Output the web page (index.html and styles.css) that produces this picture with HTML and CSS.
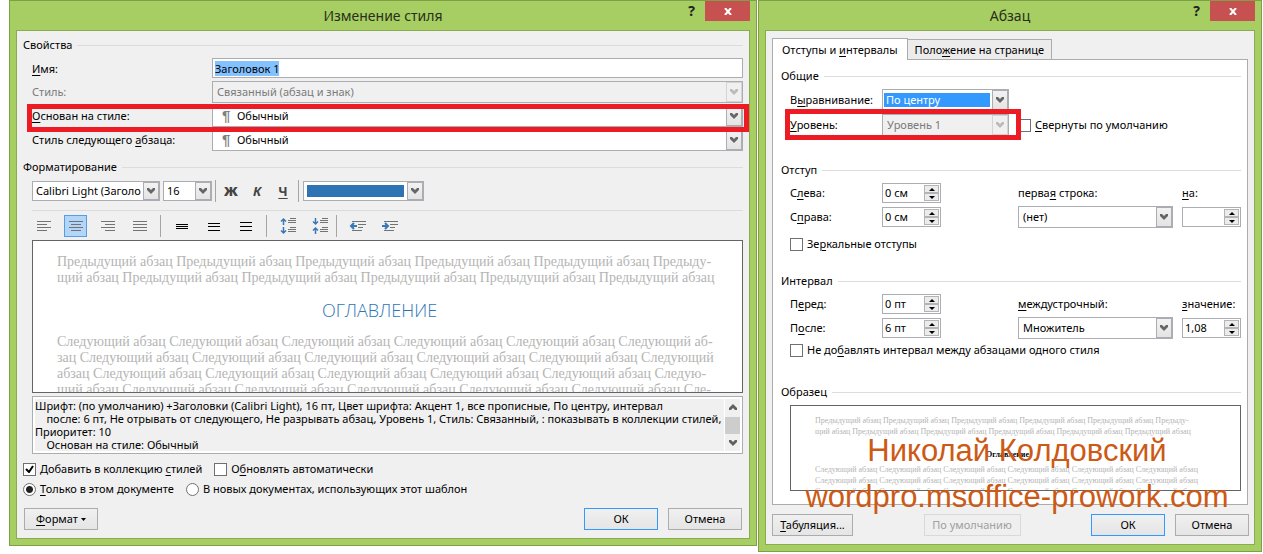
FILE: index.html
```html
<!DOCTYPE html>
<html lang="ru">
<head>
<meta charset="UTF-8">
<meta name="viewport" content="width=device-width, initial-scale=1.0">
<title>Изменение стиля</title>
<link rel="stylesheet" href="styles.css">
</head>
<body>

<main class="desktop">

<section class="dialog style-dialog">
    <header class="titlebar">
        <h1>Изменение стиля</h1>
        <div class="window-buttons">
            <button class="help-btn" aria-label="Справка">?</button>
            <button class="close-btn" aria-label="Закрыть"><svg width="8" height="7" viewBox="0 0 8 7"><path d="M1 0l6 7M7 0L1 7"/></svg></button>
        </div>
    </header>
    <div class="client">
        <h2 class="group-title">Свойства</h2>
        <div class="properties">
            <label for="styleName"><u>И</u>мя:</label>
            <input type="text" class="text-box" id="styleName" value="Заголовок 1">
            <label for="styleType" class="muted">Стиль:</label>
            <select class="combo" id="styleType" disabled><option>Связанный (абзац и знак)</option></select>
            <label for="basedOn"><u>О</u>снован на стиле:</label>
            <div class="combo-wrap">
                <select class="combo with-mark" id="basedOn"><option>Обычный</option></select>
                <span class="pilcrow">¶</span>
            </div>
            <label for="nextStyle">Стиль следующего <u>а</u>бзаца:</label>
            <div class="combo-wrap">
                <select class="combo with-mark" id="nextStyle"><option>Обычный</option></select>
                <span class="pilcrow">¶</span>
            </div>
            <div class="highlight highlight-based"></div>
        </div>

        <h2 class="group-title format-title">Форматирование</h2>
        <div class="toolbar font-bar">
            <select class="combo small font-name" aria-label="Шрифт"><option>Calibri Light (Заголовки)</option></select>
            <select class="combo small font-size" aria-label="Размер"><option>16</option></select>
            <span class="sep"></span>
            <button class="tool letter"><b>Ж</b></button>
            <button class="tool letter"><i>К</i></button>
            <button class="tool letter"><u>Ч</u></button>
            <span class="sep"></span>
            <button class="combo small color-btn" aria-label="Цвет шрифта"><span class="swatch"></span></button>
        </div>
        <div class="toolbar para-bar">
            <button class="tool" aria-label="По левому краю"><svg class="icon" viewBox="0 0 16 16"><path d="M1 3.5h14M1 6.5h10M1 9.5h14M1 12.5h10"/></svg></button>
            <button class="tool active" aria-label="По центру"><svg class="icon" viewBox="0 0 16 16"><path d="M1 3.5h14M3 6.5h10M1 9.5h14M3 12.5h10"/></svg></button>
            <button class="tool" aria-label="По правому краю"><svg class="icon" viewBox="0 0 16 16"><path d="M1 3.5h14M5 6.5h10M1 9.5h14M5 12.5h10"/></svg></button>
            <button class="tool" aria-label="По ширине"><svg class="icon" viewBox="0 0 16 16"><path d="M1 3.5h14M1 6.5h14M1 9.5h14M1 12.5h14"/></svg></button>
            <span class="sep"></span>
            <button class="tool" aria-label="Интервал 1"><svg class="icon dark" viewBox="0 0 16 16"><path d="M2 6.5h12M2 8.5h12M2 10.5h12"/></svg></button>
            <button class="tool" aria-label="Интервал 1,5"><svg class="icon dark" viewBox="0 0 16 16"><path d="M2 5.5h12M2 8.5h12M2 12.5h12"/></svg></button>
            <button class="tool" aria-label="Интервал 2"><svg class="icon dark" viewBox="0 0 16 16"><path d="M2 4.5h12M2 8.5h12M2 12.5h12"/></svg></button>
            <span class="sep"></span>
            <button class="tool" aria-label="Увеличить интервал"><svg class="icon" viewBox="0 0 16 16"><path d="M10 .5h6M8 2.5h8M8 4.5h8M10 9.5h6M8 11.5h8M8 13.5h8"/><path class="arrow" d="M3.5 1v6M1 3.5L3.5 1 6 3.5M3.5 9v6M1 12.5L3.5 15 6 12.5"/></svg></button>
            <button class="tool" aria-label="Уменьшить интервал"><svg class="icon" viewBox="0 0 16 16"><path d="M10 .5h6M8 2.5h8M8 4.5h8M10 9.5h6M8 11.5h8M8 13.5h8"/><path class="arrow" d="M3.5 0v6M1 3.5L3.5 6 6 3.5M3.5 10v6M1 12.5L3.5 10 6 12.5"/></svg></button>
            <span class="sep tight"></span>
            <button class="tool" aria-label="Уменьшить отступ"><svg class="icon" viewBox="0 0 16 16"><path d="M2 3.5h14M8 6.5h8M8 9.5h5M2 12.5h10"/><path class="arrow wide-arrow" d="M1 8h6M4 5L1 8l3 3"/></svg></button>
            <button class="tool" aria-label="Увеличить отступ"><svg class="icon" viewBox="0 0 16 16"><path d="M2 3.5h14M8 6.5h8M8 9.5h5M2 12.5h10"/><path class="arrow wide-arrow" d="M0 8h6M3 5l3 3-3 3"/></svg></button>
        </div>

        <div class="preview">
            <p>Предыдущий абзац Предыдущий абзац Предыдущий абзац Предыдущий абзац Предыдущий абзац Предыду-<br>щий абзац Предыдущий абзац Предыдущий абзац Предыдущий абзац Предыдущий абзац Предыдущий абзац</p>
            <p class="sample">ОГЛАВЛЕНИЕ</p>
            <p>Следующий абзац Следующий абзац Следующий абзац Следующий абзац Следующий абзац Следующий аб-<br>зац Следующий абзац Следующий абзац Следующий абзац Следующий абзац Следующий абзац Следующий<br>абзац Следующий абзац Следующий абзац Следующий абзац Следующий абзац Следующий абзац Следую-<br>щий абзац Следующий абзац Следующий абзац Следующий абзац Следующий абзац Следующий абзац Сле-</p>
        </div>

        <div class="description">
            <textarea rows="4" wrap="off" readonly aria-label="Описание стиля">Шрифт: (по умолчанию) +Заголовки (Calibri Light), 16 пт, Цвет шрифта: Акцент 1, все прописные, По центру, интервал
    после: 6 пт, Не отрывать от следующего, Не разрывать абзац, Уровень 1, Стиль: Связанный, : показывать в коллекции стилей,
Приоритет: 10
    Основан на стиле: Обычный</textarea>
            <div class="scrollbar">
                <svg width="8" height="6" viewBox="0 0 8 6"><path d="M0 6V4l4-4 4 4v2H6L4 4 2 6z"/></svg>
                <span class="thumb"></span>
                <svg width="8" height="6" viewBox="0 0 8 6"><path d="M0 0v2l4 4 4-4V0H6L4 2 2 0z"/></svg>
            </div>
        </div>

        <div class="options">
            <label><input type="checkbox" checked><span>Добавить в коллекцию <u>с</u>тилей</span></label>
            <label><input type="checkbox"><span>О<u>б</u>новлять автоматически</span></label>
        </div>
        <div class="options">
            <label><input type="radio" name="scope" checked><span><u>Т</u>олько в этом документе</span></label>
            <label><input type="radio" name="scope"><span>В новых документах, использующих этот шаблон</span></label>
        </div>

        <footer class="buttons">
            <button class="btn format-btn"><span><u>Ф</u>ормат</span><svg width="5" height="3" viewBox="0 0 5 3"><path d="M0 0h5L2.5 3z"/></svg></button>
            <span class="spacer"></span>
            <button class="btn default">ОК</button>
            <button class="btn">Отмена</button>
        </footer>
    </div>
</section>

<section class="dialog paragraph-dialog">
    <header class="titlebar">
        <h1>Абзац</h1>
        <div class="window-buttons">
            <button class="help-btn" aria-label="Справка">?</button>
            <button class="close-btn" aria-label="Закрыть"><svg width="8" height="7" viewBox="0 0 8 7"><path d="M1 0l6 7M7 0L1 7"/></svg></button>
        </div>
    </header>
    <div class="client">
        <div class="tabs" role="tablist">
            <button class="tab selected" role="tab">Отступы и <u>и</u>нтервалы</button>
            <button class="tab" role="tab">Поло<u>ж</u>ение на странице</button>
        </div>
        <div class="tab-panel">
            <h2 class="group-title">Общие</h2>
            <div class="general">
                <label for="align">В<u>ы</u>равнивание:</label>
                <select class="combo picked" id="align"><option>По центру</option></select>
                <span></span>
                <label for="level"><u>У</u>ровень:</label>
                <select class="combo" id="level" disabled><option>Уровень 1</option></select>
                <label class="check"><input type="checkbox"><span><u>С</u>вернуты по умолчанию</span></label>
                <div class="highlight highlight-level"></div>
            </div>

            <h2 class="group-title">Отступ</h2>
            <div class="fields">
                <label for="left">С<u>л</u>ева:</label>
                <div class="spin"><input type="text" id="left" value="0 см"><button class="up" aria-label="Больше"></button><button class="down" aria-label="Меньше"></button></div>
                <label for="firstLine" class="col-list">перва<u>я</u> строка:</label>
                <label for="firstBy"><u>н</u>а:</label>
                <label for="right">С<u>п</u>рава:</label>
                <div class="spin"><input type="text" id="right" value="0 см"><button class="up" aria-label="Больше"></button><button class="down" aria-label="Меньше"></button></div>
                <select class="combo col-list" id="firstLine"><option>(нет)</option></select>
                <div class="spin"><input type="text" id="firstBy" value=""><button class="up" aria-label="Больше"></button><button class="down" aria-label="Меньше"></button></div>
            </div>
            <label class="check mirror"><input type="checkbox"><span>Зе<u>р</u>кальные отступы</span></label>

            <h2 class="group-title">Интервал</h2>
            <div class="fields">
                <label for="before">П<u>е</u>ред:</label>
                <div class="spin"><input type="text" id="before" value="0 пт"><button class="up" aria-label="Больше"></button><button class="down" aria-label="Меньше"></button></div>
                <label for="lineRule" class="col-list"><u>м</u>еждустрочный:</label>
                <label for="lineAt"><u>з</u>начение:</label>
                <label for="after">П<u>о</u>сле:</label>
                <div class="spin"><input type="text" id="after" value="6 пт"><button class="up" aria-label="Больше"></button><button class="down" aria-label="Меньше"></button></div>
                <select class="combo col-list" id="lineRule"><option>Множитель</option></select>
                <div class="spin"><input type="text" id="lineAt" value="1,08"><button class="up" aria-label="Больше"></button><button class="down" aria-label="Меньше"></button></div>
            </div>
            <label class="check no-space"><input type="checkbox"><span>Не до<u>б</u>авлять интервал между абзацами одного стиля</span></label>

            <h2 class="group-title">Образец</h2>
            <div class="preview mini">
                <p>Предыдущий абзац Предыдущий абзац Предыдущий абзац Предыдущий абзац Предыдущий абзац Предыду-<br>щий абзац Предыдущий абзац Предыдущий абзац Предыдущий абзац Предыдущий абзац Предыдущий абзац</p>
                <p class="sample">Оглавление</p>
                <p>Следующий абзац Следующий абзац Следующий абзац Следующий абзац Следующий абзац Следующий абзац<br>Следующий абзац Следующий абзац Следующий абзац Следующий абзац Следующий абзац Следующий абзац<br>Следующий абзац Следующий абзац Следующий абзац Следующий абзац Следующий абзац Следующий абзац</p>
            </div>
        </div>

        <footer class="buttons">
            <button class="btn tabs-btn"><u>Т</u>абуляция...</button>
            <span class="spacer"></span>
            <button class="btn wide" disabled>По умолчанию</button>
            <span class="spacer"></span>
            <button class="btn default">ОК</button>
            <button class="btn">Отмена</button>
        </footer>
    </div>
    <div class="watermark">Николай Колдовский<br>wordpro.msoffice-prowork.com</div>
</section>

</main>

<script>
// Select the style name when the dialog opens
const styleName = document.getElementById('styleName');
styleName.focus();
styleName.select();
</script>
</body>
</html>
```
FILE: styles.css
```css
* {
    box-sizing: border-box;
}

body {
    margin: 0;
    background: #fff;
    color: #000;
    font-family: "Noto Sans", "Open Sans", sans-serif;
    font-size: 11px;
    line-height: 16px;
}

button,
input,
select,
textarea {
    font: inherit;
    color: inherit;
    margin: 0;
    border-radius: 0;
}

h1, h2, p {
    margin: 0;
    font-weight: normal;
}

u {
    text-underline-offset: 2px;
}

.desktop {
    display: grid;
    grid-template-columns: 748fr 504fr;
    align-items: start;
    gap: 1px;
    padding: 0 1px 0 9px;
}

/* windows */
.dialog {
    position: relative;
    min-width: 0;
    border: 1px solid #7f9f46;
    background: #a6ce62;
    padding: 0 6px 6px;
}

.titlebar {
    display: grid;
    grid-template-columns: 1fr auto 1fr;
    height: 29px;
}

.titlebar h1 {
    grid-column: 2;
    font-size: 14px;
    line-height: 30px;
    color: #2a2f1c;
}

.window-buttons {
    display: flex;
    justify-content: flex-end;
    align-items: flex-start;
    gap: 10px;
}

.help-btn {
    border: none;
    background: none;
    padding: 0;
    font-size: 14px;
    font-weight: bold;
    line-height: 20px;
    color: #222;
}

.close-btn {
    display: flex;
    align-items: center;
    justify-content: center;
    width: 45px;
    height: 20px;
    padding: 0;
    border: none;
    background: #c75050;
}

.close-btn svg {
    stroke: #fff;
    stroke-width: 2;
}

.client {
    border: 1px solid #8aab4f;
    background: #f0f0f0;
    padding: 6px 6px 8px;
}

.group-title {
    display: flex;
    align-items: center;
    gap: 5px;
    font-size: 11px;
    line-height: 16px;
}

.group-title::after {
    content: "";
    flex: 1;
    height: 1px;
    background: #dcdcdc;
}

/* controls */
.text-box {
    height: 20px;
    width: 100%;
    border: 1px solid #abadb3;
    background: #fff;
    padding: 0 2px;
    outline: none;
}

.text-box::selection {
    background: #84c1ff;
    color: #000;
}

.combo {
    appearance: none;
    height: 22px;
    width: 100%;
    padding: 0 18px 0 4px;
    border: 1px solid #abadb3;
    background-color: #fff;
    background-image:
        url("data:image/svg+xml,%3Csvg xmlns='http://www.w3.org/2000/svg' width='8' height='6'%3E%3Cpath d='M0 0v2l4 4 4-4V0H6L4 2 2 0z' fill='%23666'/%3E%3C/svg%3E"),
        linear-gradient(#f2f2f2, #e4e4e4),
        linear-gradient(#abadb3, #abadb3);
    background-size: 8px 6px, 14px calc(100% - 2px), 16px 100%;
    background-position: right 4px center, right 1px center, right center;
    background-repeat: no-repeat;
    text-overflow: clip;
    overflow: hidden;
    white-space: nowrap;
}

.combo:disabled {
    opacity: 1;
    color: #7a7a7a;
    background-color: #f0f0f0;
    background-image:
        url("data:image/svg+xml,%3Csvg xmlns='http://www.w3.org/2000/svg' width='8' height='6'%3E%3Cpath d='M0 0v2l4 4 4-4V0H6L4 2 2 0z' fill='%23bbb'/%3E%3C/svg%3E"),
        linear-gradient(#f0f0f0, #f0f0f0),
        linear-gradient(#d4d4d4, #d4d4d4);
}

.combo.small {
    height: 20px;
}

.combo.picked {
    padding-left: 3px;
    color: #fff;
    background-image:
        url("data:image/svg+xml,%3Csvg xmlns='http://www.w3.org/2000/svg' width='8' height='6'%3E%3Cpath d='M0 0v2l4 4 4-4V0H6L4 2 2 0z' fill='%23666'/%3E%3C/svg%3E"),
        linear-gradient(#f2f2f2, #e4e4e4),
        linear-gradient(#abadb3, #abadb3),
        linear-gradient(#3399ff, #3399ff);
    background-size: 8px 6px, 14px calc(100% - 2px), 16px 100%, calc(100% - 19px) 14px;
    background-position: right 4px center, right 1px center, right center, 1px center;
}

.combo-wrap {
    position: relative;
    display: flex;
}

.combo.with-mark {
    padding-left: 24px;
}

.pilcrow {
    position: absolute;
    left: 10px;
    top: 3px;
    font-family: "Liberation Sans", sans-serif;
    font-size: 15px;
    font-weight: bold;
    color: #808080;
    pointer-events: none;
}

input[type="checkbox"],
input[type="radio"] {
    appearance: none;
    flex: none;
    width: 13px;
    height: 13px;
    border: 1px solid #707070;
    background: #fff;
}

input[type="radio"] {
    border-radius: 50%;
}

input[type="radio"]:checked {
    background: radial-gradient(circle, #222 0 3px, #fff 4px);
}

input[type="checkbox"]:checked {
    background: #fff url("data:image/svg+xml,%3Csvg xmlns='http://www.w3.org/2000/svg' width='9' height='8'%3E%3Cpath d='M1 4l3 3 4-6' fill='none' stroke='%23000' stroke-width='2'/%3E%3C/svg%3E") center no-repeat;
}

.btn {
    min-width: 74px;
    height: 22px;
    padding: 0 6px;
    border: 1px solid #acacac;
    background: linear-gradient(#f0f0f0, #e5e5e5);
}

.btn.default {
    border-color: #3399ff;
}

.btn:disabled {
    color: #a0a0a0;
    border-color: #d9d9d9;
    background: #efefef;
}

.btn.wide {
    min-width: 97px;
}

.btn.tabs-btn {
    min-width: 81px;
}

.buttons {
    display: flex;
    gap: 10px;
    padding: 0 1px;
}

.spacer {
    flex: 1;
}

.highlight {
    position: absolute;
    border: 5px solid #ed1c24;
    pointer-events: none;
}

/* style dialog */
.properties {
    position: relative;
    display: grid;
    grid-template-columns: 180px 1fr;
    row-gap: 2px;
    align-items: center;
    padding: 5px 0 0 9px;
}

.properties .text-box {
    margin-bottom: 1px;
}

.muted {
    color: #7a7a7a;
}

.highlight-based {
    left: 4px;
    right: -6px;
    top: 51px;
    height: 28px;
}

.format-title {
    margin-top: 8px;
}

.toolbar {
    display: flex;
    align-items: center;
    margin-left: 9px;
}

.font-bar {
    gap: 4px;
    padding: 5px 0 8px;
    border-bottom: 1px solid #dcdcdc;
}

.font-bar .font-name {
    width: 128px;
    margin-right: -1px;
    padding-left: 3px;
}

.font-bar .font-size {
    width: 49px;
    margin-right: -1px;
    padding-left: 3px;
}

.font-bar .color-btn {
    width: 121px;
    padding: 0 19px 0 3px;
}

.swatch {
    display: block;
    height: 12px;
    background: #2e74b5;
}

.sep {
    width: 1px;
    height: 22px;
    background: #a5a5a5;
}

.tool {
    display: flex;
    align-items: center;
    justify-content: center;
    width: 23px;
    height: 22px;
    padding: 0;
    border: none;
    background: none;
}

.tool.active {
    border: 1px solid #569de5;
    background: #b3d5f7;
}

.letter {
    width: 22px;
    height: 20px;
    font-size: 13px;
    font-weight: bold;
    color: #444;
}

.para-bar {
    gap: 9px;
    padding: 4px 0 3px;
}

.para-bar .tight {
    margin-left: -4px;
}

.icon {
    width: 16px;
    height: 16px;
    fill: none;
    stroke: #737373;
    overflow: visible;
    shape-rendering: crispEdges;
}

.icon.dark {
    stroke: #000;
}

.icon .arrow {
    stroke: #3a78b5;
    stroke-width: 1.5;
    shape-rendering: auto;
}

.icon .wide-arrow {
    stroke-width: 2;
}

.preview {
    height: 153px;
    margin-left: 9px;
    padding: 13px 24px 0;
    border: 1px solid #646464;
    background: #fff;
    overflow: hidden;
    font-family: "Liberation Serif", serif;
    font-size: 14px;
    line-height: 16px;
    color: #b4b4b4;
    white-space: nowrap;
}

.preview .sample {
    margin: 14px 0;
    padding-right: 16px;
    text-align: center;
    font-family: "Open Sans", sans-serif;
    font-size: 18px;
    font-weight: 300;
    line-height: 20px;
    color: #2e74b5;
}

.description {
    display: flex;
    height: 58px;
    margin: 3px 0 0 9px;
    border: 1px solid #abadb3;
    padding: 2px;
    background: #fff;
}

.description textarea {
    flex: 1;
    min-width: 0;
    resize: none;
    overflow: hidden;
    border: none;
    padding: 0;
    background: #f0f0f0;
    line-height: 13px;
}

.scrollbar {
    display: flex;
    flex-direction: column;
    align-items: center;
    justify-content: space-between;
    width: 15px;
    margin-left: 1px;
    padding: 5px 0;
    background: #f0f0f0;
    fill: #606060;
}

.thumb {
    width: 100%;
    height: 17px;
    background: #cdcdcd;
}

.options {
    display: flex;
    gap: 12px;
    margin-bottom: 4px;
}

.description + .options {
    margin-top: 7px;
}

.options label,
.check {
    display: flex;
    align-items: center;
    gap: 4px;
}

.style-dialog .buttons {
    margin-top: 11px;
}

.format-btn {
    display: flex;
    align-items: center;
    justify-content: center;
    gap: 3px;
}

/* paragraph dialog */
.paragraph-dialog .client {
    padding: 7px 6px 8px;
}

.tabs {
    display: flex;
    align-items: flex-end;
}

.tab {
    height: 20px;
    padding: 0 7px;
    border: 1px solid #acacac;
    border-bottom: none;
    border-left: none;
    background: #ececec;
}

.tab.selected {
    position: relative;
    height: 22px;
    padding: 0 9px;
    border-left: 1px solid #acacac;
    background: #fff;
    margin-bottom: -1px;
}

.tab-panel {
    border: 1px solid #acacac;
    background: #fff;
    padding: 8px 6px 13px 8px;
}

.general,
.fields {
    display: grid;
    align-items: center;
    padding-left: 9px;
}

.general {
    position: relative;
    grid-template-columns: 92px 127px 1fr;
    row-gap: 3px;
    padding-top: 5px;
    margin-bottom: 26px;
}

.general .check {
    margin-left: 9px;
}

.highlight-level {
    left: 4px;
    top: 25px;
    width: 236px;
    height: 31px;
}

.fields {
    grid-template-columns: 92px 59px 1fr 59px;
    grid-auto-rows: 20px;
    row-gap: 4px;
    padding-top: 5px;
}

.fields .col-list {
    width: auto;
    margin: 0 9px 0 77px;
}

.spin {
    display: grid;
    grid-template: 1fr 1fr / 1fr 15px;
    height: 20px;
    padding: 1px;
    border: 1px solid #abadb3;
    background: #fff;
}

.spin input {
    grid-row: 1 / 3;
    min-width: 0;
    width: 100%;
    border: none;
    padding: 0 1px;
    background: none;
}

.spin button {
    display: flex;
    align-items: center;
    justify-content: center;
    padding: 0;
    border: 1px solid #b4b4b4;
    background: #ececec;
}

.spin button::before {
    content: "";
    border: 3px solid transparent;
}

.spin .up::before {
    border-top: none;
    border-bottom-color: #000;
}

.spin .down::before {
    border-bottom: none;
    border-top-color: #000;
}

.mirror {
    margin: 9px 0 21px 9px;
}

.no-space {
    margin: 4px 0 26px 9px;
}

.preview.mini {
    height: 86px;
    margin-top: 5px;
    padding: 9px 24px 0;
    font-size: 8px;
    line-height: 11px;
}

.mini .sample {
    margin: 12px 0 4px;
    padding-right: 16px;
    font-family: "Liberation Serif", serif;
    font-size: 8px;
    font-weight: bold;
    line-height: 11px;
    color: #000;
}

.paragraph-dialog .buttons {
    padding: 0;
    margin-top: 9px;
    margin-right: -1px;
}

.watermark {
    position: absolute;
    left: 0;
    right: 0;
    bottom: 31px;
    padding-left: 14px;
    text-align: center;
    font-family: "Liberation Sans", sans-serif;
    font-size: 31px;
    line-height: 46px;
    color: #cc5a14;
    white-space: nowrap;
    pointer-events: none;
}
```
